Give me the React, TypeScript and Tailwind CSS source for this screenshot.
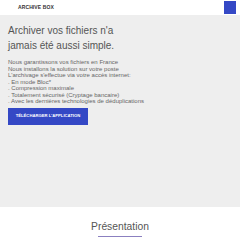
import React from "react";

export default function App() {
  const lines = [
    "Nous garantissons vos fichiers en France",
    "Nous installons la solution sur votre poste",
    "L'archivage s'effectue via votre accès internet:",
    ". En mode Bloc*",
    ". Compression maximale",
    ". Totalement sécurisé (Cryptage bancaire)",
    ". Avec les dernières technologies de déduplications",
  ];
  return (
    <div className="w-[240px] h-[240px] overflow-hidden bg-white" style={{ fontFamily: '"Liberation Sans", Arial, sans-serif' }}>
      <header className="h-[15px] flex items-center justify-between pl-[18px] pr-[4px] bg-white shadow-[0_1px_1px_rgba(0,0,0,0.06)]">
        <span className="text-[5px] font-bold text-[#333] tracking-[0.1px]">ARCHIVE BOX</span>
        <div className="w-[12px] h-[13px] bg-[#3448c5]" />
      </header>
      <section className="h-[192px] bg-[#eeeeee] pl-[8px] pt-[8px]">
        <h1 className="text-[10px] leading-[15px] text-[#555]">
          Archiver vos fichiers n'a<br />jamais été aussi simple.
        </h1>
        <div className="mt-[6px] text-[6px] leading-[6.5px] text-[#666]">
          {lines.map((l) => (
            <div key={l}>{l}</div>
          ))}
        </div>
        <button className="mt-[3px] w-[80px] h-[17px] bg-[#3448c5] text-white text-[4.2px] font-bold flex items-center justify-center">
          TÉLÉCHARGER L'APPLICATION
        </button>
      </section>
      <section className="flex flex-col items-center pt-[13px]">
        <h2 className="text-[10.3px] leading-[13px] text-[#555]">Présentation</h2>
        <div className="mt-[3px] w-[44px] h-[1px] bg-[#8b80c0]" />
      </section>
    </div>
  );
}
